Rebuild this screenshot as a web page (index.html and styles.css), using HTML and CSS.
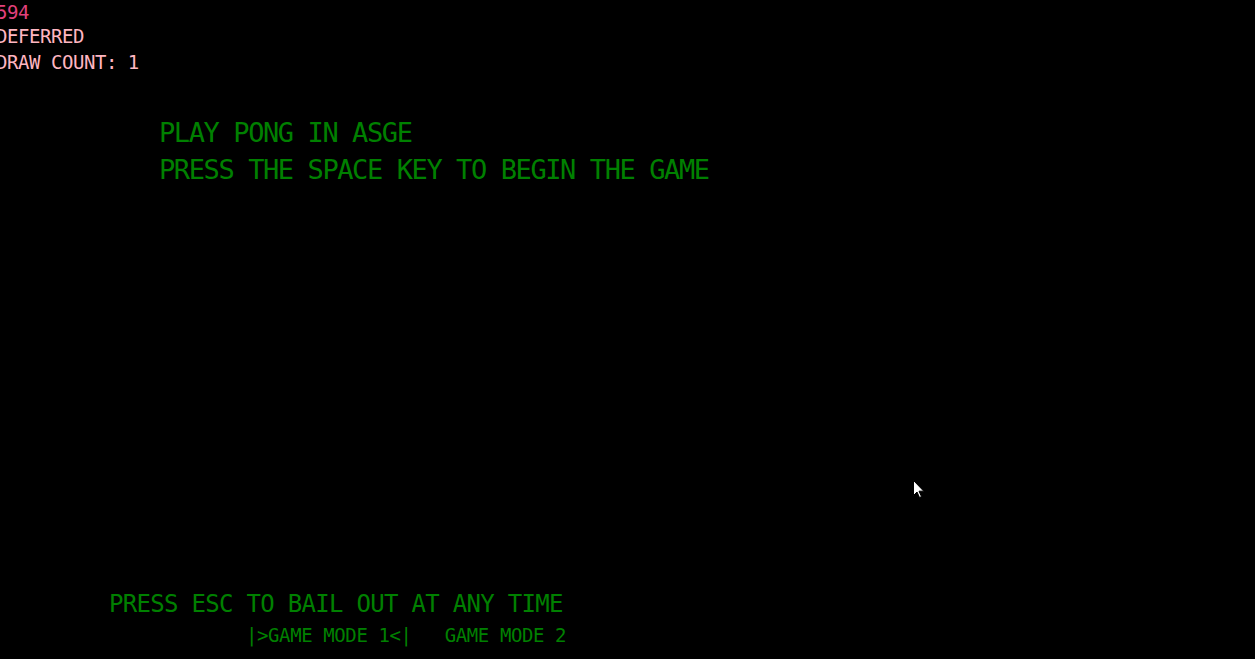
FILE: index.html
```html
<!DOCTYPE html>
<html>
<head>
<meta charset="utf-8">
<link rel="stylesheet" href="styles.css">
</head>
<body>
<div class="screen">
  <div class="debug">
    <div class="txt fps">594</div>
    <div class="txt">DEFERRED</div>
    <div class="txt count">DRAW COUNT: 1</div>
  </div>
  <div class="title">
    <div class="txt">PLAY PONG IN ASGE</div>
    <div class="txt">PRESS THE SPACE KEY TO BEGIN THE GAME</div>
  </div>
  <div class="footer">
    <div class="txt esc">PRESS ESC TO BAIL OUT AT ANY TIME</div>
    <div class="txt modes">|&gt;GAME MODE 1&lt;|   GAME MODE 2</div>
  </div>
  <svg class="cursor" width="12" height="19" viewBox="0 0 12 19">
    <path d="M0.5 0.5 L0.5 15.5 L4 12 L6.5 17.5 L8.5 16.6 L6 11.2 L10.8 11.2 Z" fill="#fff" stroke="#000" stroke-width="1"/>
  </svg>
</div>
</body>
</html>
```
FILE: styles.css
```css
html, body {
  margin: 0;
  padding: 0;
  background: #000;
}
.screen {
  position: relative;
  height: 659px;
  overflow: hidden;
  display: flex;
  flex-direction: column;
  font-family: "DejaVu Sans Mono", monospace;
}
.txt {
  white-space: pre;
}
.debug {
  margin-left: -4px;
  font-size: 19px;
  line-height: 24px;
  letter-spacing: -0.45px;
  color: #ffb6c1;
}
.fps {
  color: #e2407c;
}
.count {
  margin-top: 2px;
}
.title {
  margin-top: 40px;
  margin-left: 159px;
  font-size: 27px;
  line-height: 37px;
  letter-spacing: -1.4px;
  color: #008000;
}
.footer {
  margin-top: auto;
  padding-bottom: 8px;
  color: #008000;
}
.esc {
  margin-left: 109px;
  font-size: 24px;
  line-height: 31px;
  letter-spacing: -0.7px;
}
.modes {
  margin-left: 246px;
  font-size: 19px;
  line-height: 31px;
  letter-spacing: -0.4px;
}
.cursor {
  position: absolute;
  left: 913px;
  top: 480px;
}
```
